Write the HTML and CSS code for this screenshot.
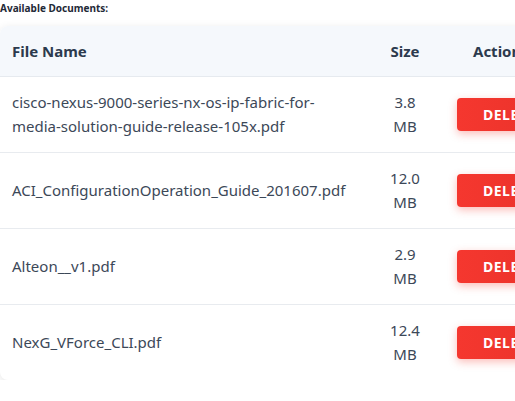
FILE: index.html
```html
<!DOCTYPE html>
<html>
<head>
<meta charset="utf-8">
<link rel="stylesheet" href="styles.css">
</head>
<body>
<div class="page">
  <h3 class="title">Available Documents:</h3>
  <div class="card">
    <table class="docs">
      <thead>
        <tr>
          <th class="c-name">File Name</th>
          <th class="c-size">Size</th>
          <th class="c-act">Action</th>
        </tr>
      </thead>
      <tbody>
        <tr>
          <td class="c-name">cisco-nexus-9000-series-nx-os-ip-fabric-for-media-solution-guide-release-105x.pdf</td>
          <td class="c-size">3.8 MB</td>
          <td class="c-act"><button class="del">DELETE</button></td>
        </tr>
        <tr>
          <td class="c-name">ACI_ConfigurationOperation_Guide_201607.pdf</td>
          <td class="c-size">12.0 MB</td>
          <td class="c-act"><button class="del">DELETE</button></td>
        </tr>
        <tr>
          <td class="c-name">Alteon__v1.pdf</td>
          <td class="c-size">2.9 MB</td>
          <td class="c-act"><button class="del">DELETE</button></td>
        </tr>
        <tr>
          <td class="c-name">NexG_VForce_CLI.pdf</td>
          <td class="c-size">12.4 MB</td>
          <td class="c-act"><button class="del">DELETE</button></td>
        </tr>
      </tbody>
    </table>
  </div>
</div>
</body>
</html>
```

FILE: styles.css
```css
html, body {
  margin: 0;
  padding: 0;
  background: #ffffff;
  overflow: hidden;
}
body {
  font-family: "Noto Sans", "Open Sans", sans-serif;
  color: #3c4858;
}
.page {
  width: 640px;
}
.title {
  margin: 0;
  padding-top: 2px;
  height: 22px;
  font-size: 10px;
  line-height: 12px;
  font-weight: 700;
  color: #1f2a37;
}
.card {
  margin-top: 2px;
  width: 620px;
  background: #fff;
  border-radius: 8px;
  box-shadow: 0 2px 8px rgba(0, 0, 0, 0.10);
  overflow: hidden;
}
.docs {
  width: 100%;
  border-collapse: collapse;
  table-layout: fixed;
}
.docs thead th {
  background: #f5f8fc;
  height: 50px;
  padding: 0 12px;
  font-size: 15px;
  font-weight: 700;
  color: #2c3a4d;
  text-align: left;
  border-bottom: 1px solid #e6eaef;
  box-sizing: border-box;
}
.docs td {
  padding: 13px 12px;
  font-size: 15px;
  line-height: 24px;
  height: 76px;
  box-sizing: border-box;
  border-bottom: 1px solid #e8ebef;
  vertical-align: middle;
}
.docs tbody tr:last-child td {
  border-bottom: none;
}
.c-name { width: 373px; }
.c-size { width: 64px; text-align: center; }
.docs thead th.c-size { text-align: center; }
.docs thead th.c-act { padding-left: 36px; }
.docs td.c-act { padding-left: 20px; }
.del {
  height: 33px;
  width: 110px;
  border: none;
  border-radius: 4px;
  background: linear-gradient(90deg, #f5372f, #e8322a);
  color: #fff;
  font-family: "Noto Sans", sans-serif;
  font-weight: 700;
  font-size: 14px;
  letter-spacing: 0.5px;
  text-align: left;
  padding-left: 26px;
  box-shadow: 0 3px 8px rgba(244, 67, 54, 0.35);
}
```
